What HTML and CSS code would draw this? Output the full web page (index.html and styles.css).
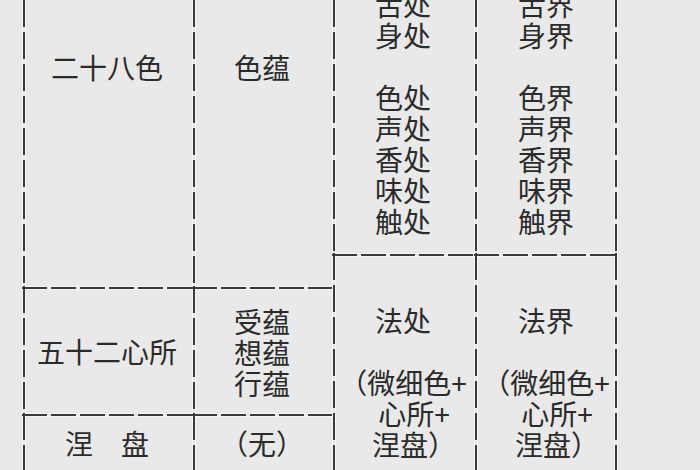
FILE: index.html
```html
<!DOCTYPE html>
<html lang="zh">
<head>
<meta charset="utf-8">
<title>色心表</title>
<link rel="stylesheet" href="styles.css">
</head>
<body>
<div class="table">
  <div class="cell a l start pad-a"><p class="txt">二十八色</p></div>
  <div class="cell b l start pad-a"><p class="txt">色蕴</p></div>
  <div class="cell c l end"><p class="txt">舌处<br>身处<br>&nbsp;<br>色处<br>声处<br>香处<br>味处<br>触处</p></div>
  <div class="cell d l r end"><p class="txt">舌界<br>身界<br>&nbsp;<br>色界<br>声界<br>香界<br>味界<br>触界</p></div>
  <div class="cell e l t start pad-e">
    <p class="txt">法处</p>
    <p class="txt">&nbsp;</p>
    <p class="txt">（微细色+</p>
    <p class="txt shift">心所+</p>
    <p class="txt shift">涅盘）</p>
  </div>
  <div class="cell f l t r start pad-e">
    <p class="txt">法界</p>
    <p class="txt">&nbsp;</p>
    <p class="txt">（微细色+</p>
    <p class="txt shift">心所+</p>
    <p class="txt shift">涅盘）</p>
  </div>
  <div class="cell g l t mid"><p class="txt">五十二心所</p></div>
  <div class="cell h l t mid"><p class="txt">受蕴<br>想蕴<br>行蕴</p></div>
  <div class="cell i l t mid"><p class="txt">涅　盘</p></div>
  <div class="cell j l t mid"><p class="txt">（无）</p></div>
</div>
</body>
</html>
```

FILE: styles.css
```css
html, body {
  margin: 0;
  padding: 0;
  background: #e9e9e9;
  overflow: hidden;
}
body {
  width: 700px;
  height: 470px;
  font-family: "Noto Sans CJK SC", "Noto Sans", sans-serif;
  color: #2b2b2b;
}
.table {
  display: grid;
  grid-template-columns: 170px 140px 142px 144px;
  grid-template-rows: 253px 33px 127px 57px;
  padding-left: 22px;
  height: 470px;
  box-sizing: border-box;
}
.cell {
  --L: none; --T: none; --R: none;
  --LH: none; --TH: none; --RH: none;
  display: flex;
  flex-direction: column;
  min-height: 0;
  background-image: var(--L), var(--T), var(--R), var(--LH), var(--TH), var(--RH);
  background-position: 1px 0, 0 1px, calc(100% - 1px) 0, 0 0, 0 0, 100% 0;
  background-size: 2px 100%, 100% 2px, 2px 100%, 4px 100%, 100% 4px, 4px 100%;
  background-repeat: no-repeat;
}
.l {
  --L: repeating-linear-gradient(to bottom, #3a3a3a 0 27px, transparent 27px 32px);
  --LH: linear-gradient(to right, #f6f6f6 0 1px, transparent 1px 3px, #f6f6f6 3px 4px);
}
.t {
  --T: repeating-linear-gradient(to right, #3a3a3a 0 25px, transparent 25px 29px);
  --TH: linear-gradient(to bottom, #f6f6f6 0 1px, transparent 1px 3px, #f6f6f6 3px 4px);
}
.r {
  --R: repeating-linear-gradient(to bottom, #3a3a3a 0 27px, transparent 27px 32px);
  --RH: linear-gradient(to right, #f6f6f6 0 1px, transparent 1px 3px, #f6f6f6 3px 4px);
}
.a { grid-column: 1; grid-row: 1 / 3; }
.b { grid-column: 2; grid-row: 1 / 3; }
.c { grid-column: 3; grid-row: 1; }
.d { grid-column: 4; grid-row: 1; }
.e { grid-column: 3; grid-row: 2 / 5; }
.f { grid-column: 4; grid-row: 2 / 5; }
.g { grid-column: 1; grid-row: 3; }
.h { grid-column: 2; grid-row: 3; }
.i { grid-column: 1; grid-row: 4; }
.j { grid-column: 2; grid-row: 4; }

.start { justify-content: flex-start; }
.end { justify-content: flex-end; padding-bottom: 16px; }
.mid { justify-content: center; padding-top: 3px; }
.h { padding-top: 5px; }
.pad-a { padding-top: 52px; }
.pad-e { padding-top: 52px; }

.txt {
  margin: 0;
  font-size: 28px;
  line-height: 31px;
  text-align: center;
  white-space: nowrap;
}
.shift { padding-left: 22px; }
```
